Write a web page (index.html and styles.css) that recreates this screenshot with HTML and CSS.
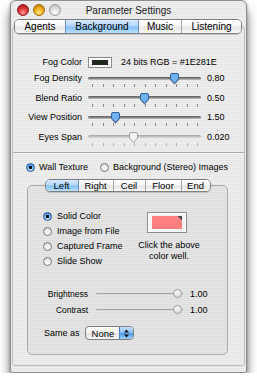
FILE: index.html
```html
<!DOCTYPE html>
<html lang="en">

<head>
    <meta charset="UTF-8">
    <meta name="viewport" content="width=device-width, initial-scale=1.0">
    <title>Parameter Settings</title>
    <link rel="stylesheet" href="styles.css">
</head>

<body>
    <div class="window">
        <div class="titlebar">
            <div class="lights">
                <span class="light red"></span>
                <span class="light yellow"></span>
                <span class="light off"></span>
            </div>
            <div class="title">Parameter Settings</div>
            <div></div>
        </div>

        <div class="tabbar main-tabs">
            <span class="tab">Agents</span>
            <span class="tab selected">Background</span>
            <span class="tab">Music</span>
            <span class="tab">Listening</span>
        </div>

        <section class="tabbox">
            <div class="form">
                <span class="lbl first">Fog Color</span>
                <div class="fog">
                    <span class="well small"><span class="fill"></span></span>
                    <span>24 bits RGB = #1E281E</span>
                </div>

                <span class="lbl">Fog Density</span>
                <div class="slider" style="--v:.774">
                    <div class="track"></div>
                    <div class="ticks"><i></i><i></i><i></i><i></i><i></i><i></i><i></i><i></i><i></i><i></i><i></i></div>
                    <svg class="knob" width="9" height="11" viewBox="0 0 9 11"><path d="M0.5 2 Q0.5 0.5 2 0.5 H7 Q8.5 0.5 8.5 2 V6 L4.5 10.5 L0.5 6 Z" /></svg>
                </div>
                <span class="val">0.80</span>

                <span class="lbl">Blend Ratio</span>
                <div class="slider" style="--v:.49">
                    <div class="track"></div>
                    <div class="ticks"><i></i><i></i><i></i><i></i><i></i><i></i><i></i><i></i><i></i><i></i><i></i></div>
                    <svg class="knob" width="9" height="11" viewBox="0 0 9 11"><path d="M0.5 2 Q0.5 0.5 2 0.5 H7 Q8.5 0.5 8.5 2 V6 L4.5 10.5 L0.5 6 Z" /></svg>
                </div>
                <span class="val">0.50</span>

                <span class="lbl">View Position</span>
                <div class="slider" style="--v:.217">
                    <div class="track"></div>
                    <div class="ticks"><i></i><i></i><i></i><i></i><i></i><i></i><i></i><i></i><i></i><i></i><i></i></div>
                    <svg class="knob" width="9" height="11" viewBox="0 0 9 11"><path d="M0.5 2 Q0.5 0.5 2 0.5 H7 Q8.5 0.5 8.5 2 V6 L4.5 10.5 L0.5 6 Z" /></svg>
                </div>
                <span class="val">1.50</span>

                <span class="lbl">Eyes Span</span>
                <div class="slider disabled" style="--v:.387">
                    <div class="track"></div>
                    <div class="ticks"><i></i><i></i><i></i><i></i><i></i><i></i><i></i><i></i><i></i><i></i><i></i></div>
                    <svg class="knob" width="9" height="11" viewBox="0 0 9 11"><path d="M0.5 2 Q0.5 0.5 2 0.5 H7 Q8.5 0.5 8.5 2 V6 L4.5 10.5 L0.5 6 Z" /></svg>
                </div>
                <span class="val">0.020</span>
            </div>

            <div class="sep"></div>

            <div class="choice">
                <span class="radio on"></span><span>Wall Texture</span>
                <span class="radio second"></span><span>Background (Stereo) Images</span>
            </div>

            <div class="subview">
                <div class="tabbar sub-tabs">
                    <span class="tab selected">Left</span>
                    <span class="tab">Right</span>
                    <span class="tab">Ceil</span>
                    <span class="tab">Floor</span>
                    <span class="tab">End</span>
                </div>

                <div class="subbox">
                    <div class="source">
                        <ul class="radios">
                            <li><span class="radio on"></span>Solid Color</li>
                            <li><span class="radio"></span>Image from File</li>
                            <li><span class="radio"></span>Captured Frame</li>
                            <li><span class="radio"></span>Slide Show</li>
                        </ul>
                        <div class="wellcol">
                            <span class="well big"><span class="fill"></span></span>
                            <p>Click the above<br>color well.</p>
                        </div>
                    </div>

                    <div class="levels">
                        <span class="lbl">Brightness</span>
                        <div class="line"><span class="dot"></span></div>
                        <span class="val">1.00</span>

                        <span class="lbl">Contrast</span>
                        <div class="line"><span class="dot"></span></div>
                        <span class="val">1.00</span>
                    </div>

                    <div class="same">
                        <span>Same as</span>
                        <span class="popup">None
                            <span class="arrows">
                                <svg width="5" height="9" viewBox="0 0 5 9"><path d="M2.5 0.5 L5 3.5 H0 Z M0 5.5 H5 L2.5 8.5 Z" /></svg>
                            </span>
                        </span>
                    </div>
                </div>
            </div>
        </section>
    </div>
</body>

</html>
```

FILE: styles.css
```css
* {
    margin: 0;
    padding: 0;
    box-sizing: border-box;
}

body {
    background: #fff;
    font-family: "Liberation Sans", Arial, sans-serif;
    font-size: 9px;
    color: #000;
}

.window {
    width: 237px;
    height: 373px;
    margin-left: 10px;
    border: 1px solid #8c8c8c;
    border-radius: 6px 6px 3px 3px;
    background: repeating-linear-gradient(#efefef 0 1px, #e6e6e6 1px 2px);
    box-shadow: 0 9px 11px rgba(0, 0, 0, .55), 0 0 3px rgba(0, 0, 0, .3);
}

/* title bar */

.titlebar {
    height: 18px;
    display: grid;
    grid-template-columns: 1fr auto 1fr;
    align-items: center;
}

.lights {
    display: flex;
    gap: 4px;
    padding-left: 6px;
}

.light {
    width: 12px;
    height: 12px;
    border-radius: 50%;
    border: 1px solid #7a7a7a;
}

.red {
    background: radial-gradient(circle at 50% 75%, #ff9a9a, #e0393a 45%, #a51010);
    border-color: #8e1b1b;
}

.yellow {
    background: radial-gradient(circle at 50% 75%, #ffe58a, #f2b21e 45%, #b86e00);
    border-color: #9a6a08;
}

.off {
    background: radial-gradient(circle at 50% 75%, #fdfdfd, #dcdcdc 50%, #b4b4b4);
    border-color: #9c9c9c;
}

.title {
    font-size: 10px;
    color: #1a1a1a;
}

/* tabs */

.tabbar {
    position: relative;
    z-index: 1;
    display: grid;
    border: 1px solid #7f7f7f;
    border-radius: 5px;
    overflow: hidden;
    box-shadow: 0 1px 1px rgba(0, 0, 0, .15);
}

.main-tabs {
    height: 15px;
    margin: 0 4px 0 3px;
    grid-template-columns: 50px 73px 43px 1fr;
    font-size: 10px;
}

.tab {
    display: flex;
    align-items: center;
    justify-content: center;
    background: linear-gradient(#ffffff, #f7f7f7 45%, #e6e6e6 55%, #f8f8f8);
    border-left: 1px solid #a6a6a6;
}

.tab:first-child {
    border-left: none;
}

.tab.selected {
    background: linear-gradient(#d5e9fd, #b4d8fb 45%, #86c0f5 55%, #b9e1ff);
    border-left-color: #6d8fb8;
}

.tab.selected + .tab {
    border-left-color: #6d8fb8;
}

.tabbox {
    margin: -8px 1px 0;
    height: 340px;
    padding-top: 29px;
    border: 1px solid #bdbdbd;
    border-radius: 3px;
}

/* upper form */

.form {
    display: grid;
    grid-template-columns: 69px 113px 1fr;
    grid-template-rows: 15px repeat(4, 19.5px);
    column-gap: 6px;
}

.lbl {
    text-align: right;
    line-height: 14px;
}

.lbl.first {
    line-height: 12px;
}

.val {
    line-height: 14px;
}

.fog {
    grid-column: 2 / 4;
    height: 12px;
    display: flex;
    align-items: center;
    gap: 9px;
}

.well {
    display: flex;
    border: 1px solid #8a8a8a;
    background: #f4f4f4;
    box-shadow: inset 0 0 0 1px #fff;
}

.well.small {
    width: 24px;
    height: 11px;
    padding: 2px 3px;
}

.well.small .fill {
    flex: 1;
    background: #1e281e;
}

.slider {
    position: relative;
}

.track {
    margin-top: 5.5px;
    height: 3px;
    border-radius: 2px;
    background: linear-gradient(#5a5a5a, #8e8e8e 60%, #c9c9c9);
}

.ticks {
    display: flex;
    justify-content: space-between;
    padding: 0 3px 0 4px;
    margin-top: 4.5px;
}

.ticks i {
    width: 1px;
    height: 3px;
    background: #8c8c8c;
}

.knob {
    position: absolute;
    top: 2px;
    left: calc(var(--v) * 106px);
    fill: #6fb2f2;
    stroke: #2f5f9c;
    stroke-width: 1;
    filter: drop-shadow(0 1px 0.5px rgba(0, 0, 0, .3));
}

.disabled .track {
    background: linear-gradient(#a6a6a6, #c4c4c4 60%, #e2e2e2);
}

.disabled .ticks i {
    background: #b4b4b4;
}

.disabled .knob {
    fill: #f4f4f4;
    stroke: #a2a2a2;
    filter: none;
}

.disabled ~ .val {
    color: #000;
}

.sep {
    margin-top: 3px;
    border-top: 1px solid #a9a9a9;
    border-bottom: 1px solid #f9f9f9;
}

/* radios */

.choice {
    margin-top: 6px;
    height: 14px;
    padding-left: 13px;
    display: flex;
    align-items: center;
    gap: 4px;
}

.radio {
    width: 9px;
    height: 9px;
    border-radius: 50%;
    border: 1px solid #7a7a7a;
    background: radial-gradient(circle at 50% 75%, #ffffff, #e8e8e8 60%, #c8c8c8);
}

.radio.on {
    border-color: #2c5a92;
    background: radial-gradient(circle, #111 0 1.6px, transparent 2px), radial-gradient(circle at 50% 80%, #c6e4ff, #5ea6ee 60%, #3d7fcf);
}

.choice .second {
    margin-left: 8px;
}

/* lower tab view */

.subview {
    margin: 5px 16px 0 14px;
}

.sub-tabs {
    height: 13px;
    width: 166px;
    margin: 0 auto;
    grid-template-columns: 32px 35px 32px 36px 1fr;
    font-size: 9.5px;
}

.subbox {
    margin-top: -7px;
    padding: 22.5px 0 14px 15px;
    border: 1px solid #a9a9a9;
    border-radius: 5px;
    background: rgba(0, 0, 0, .035);
}

.source {
    display: flex;
}

.radios {
    list-style: none;
    width: 90px;
}

.radios li {
    height: 15px;
    display: flex;
    align-items: center;
    gap: 5px;
}

.wellcol {
    width: 72px;
    padding-top: 3.5px;
    display: flex;
    flex-direction: column;
    align-items: center;
}

.well.big {
    width: 40px;
    height: 21px;
    padding: 3px 4px;
    margin-left: -4px;
}

.well.big .fill {
    flex: 1;
    background: linear-gradient(225deg, #4a4a4a 0 3px, #ff8080 3px);
}

.wellcol p {
    margin-top: 7px;
    text-align: center;
    line-height: 11px;
}

.levels {
    margin: 17.5px 0 0 -15px;
    display: grid;
    grid-template-columns: 60px 87px 1fr;
    grid-auto-rows: 16px;
    column-gap: 8px;
    align-items: center;
}

.levels .lbl {
    font-size: 8.5px;
}

.levels .val {
    padding-left: -1px;
    margin-left: -1px;
}

.line {
    position: relative;
    height: 2px;
    border-radius: 1px;
    background: #a6a6a6;
    border-bottom: 1px solid #d8d8d8;
}

.dot {
    position: absolute;
    right: 1px;
    top: -4px;
    width: 9px;
    height: 9px;
    border-radius: 50%;
    border: 1px solid #9a9a9a;
    background: linear-gradient(#f8f8f8, #dedede);
}

.same {
    margin-top: 8px;
    padding-left: 1px;
    display: flex;
    align-items: center;
    gap: 5px;
}

.popup {
    width: 49px;
    height: 14px;
    display: flex;
    align-items: center;
    padding-left: 6px;
    border: 1px solid #7f7f7f;
    border-radius: 4px;
    overflow: hidden;
    background: linear-gradient(#ffffff, #f2f2f2 50%, #e4e4e4 55%, #f8f8f8);
    font-size: 9.5px;
}

.arrows {
    margin-left: auto;
    width: 14px;
    height: 100%;
    display: flex;
    align-items: center;
    justify-content: center;
    border-left: 1px solid #4c7fbf;
    background: linear-gradient(#c7e2fd, #82bdf5 50%, #4f97e8 55%, #9dd1ff);
}

.arrows svg {
    fill: #111;
}
```
